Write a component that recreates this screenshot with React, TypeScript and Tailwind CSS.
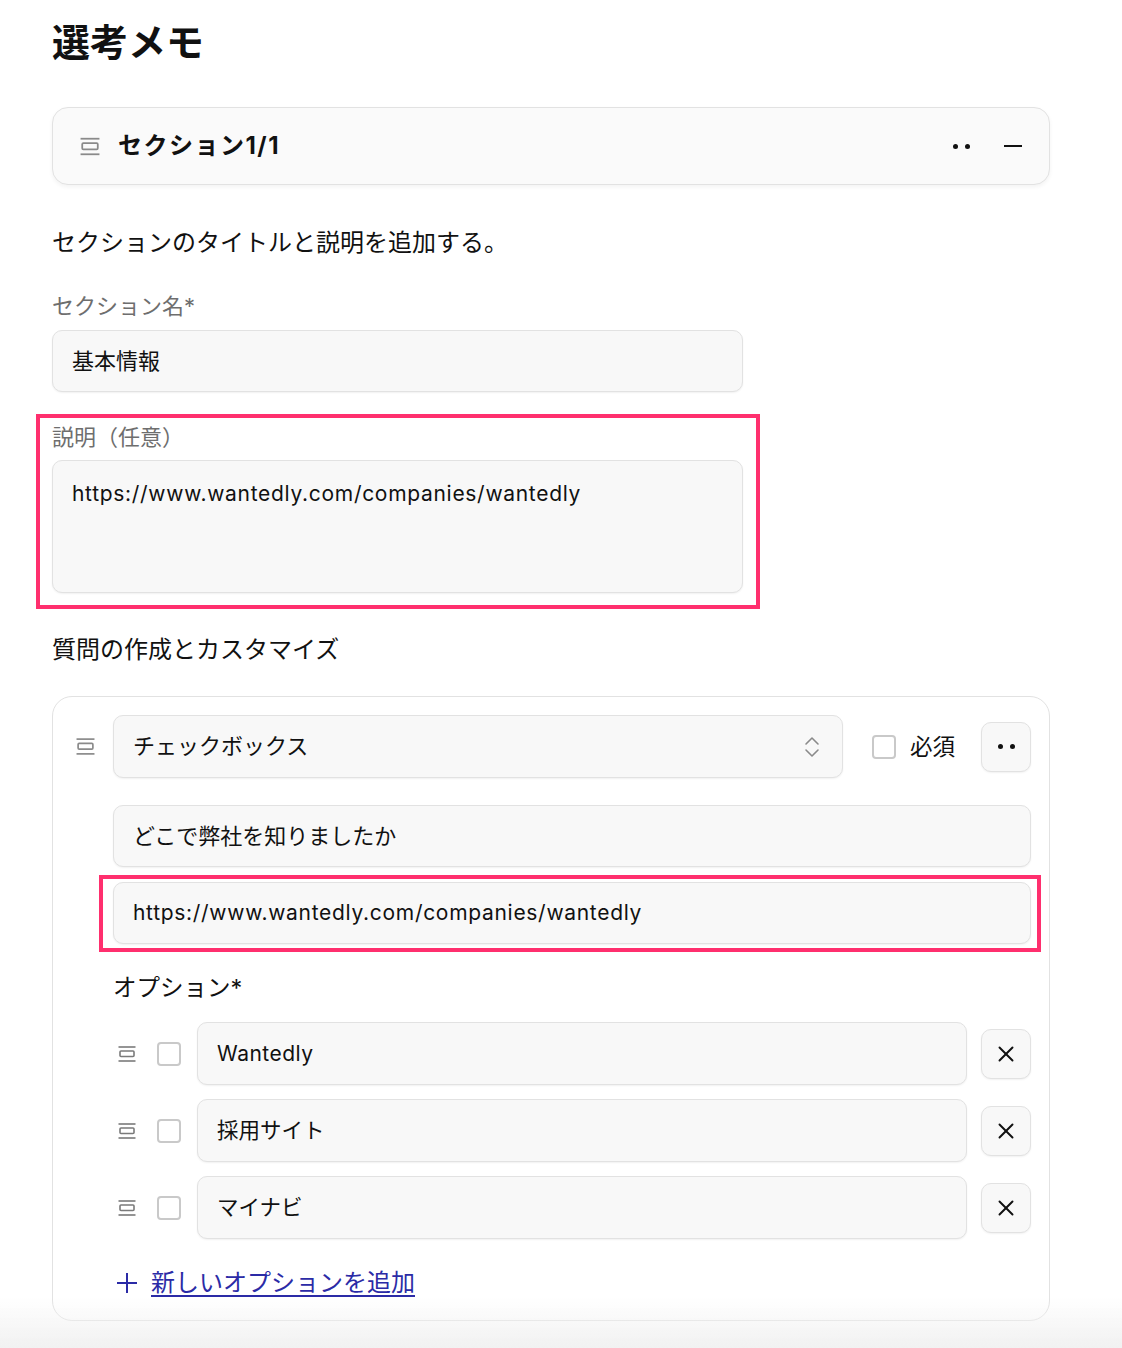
import { X } from 'lucide-react'

const font = { fontFamily: '"Inter", "Noto Sans CJK JP", sans-serif' }

function DragHandle({ className = '' }: { className?: string }) {
  return (
    <svg viewBox="0 0 18 16" className={`shrink-0 ${className}`} fill="none" stroke="currentColor" strokeWidth="1.6">
      <line x1="0.5" y1="1" x2="17.5" y2="1" />
      <rect x="2" y="5" width="14" height="5.5" rx="1" />
      <line x1="0.5" y1="15" x2="17.5" y2="15" />
    </svg>
  )
}

function Dots() {
  return (
    <span className="flex items-center gap-[7px]">
      <span className="h-[5px] w-[5px] rounded-full bg-[#111]" />
      <span className="h-[5px] w-[5px] rounded-full bg-[#111]" />
    </span>
  )
}

function Checkbox() {
  return <span className="block h-[24px] w-[24px] shrink-0 rounded-[4px] border-2 border-[#c9c9c9] bg-white" />
}

const field =
  'flex items-center rounded-[10px] border border-[#e2e2e2] bg-[#f8f8f8] px-[19px] text-[22px] text-[#111] shadow-[0_1px_2px_rgba(0,0,0,0.06)]'

const options = ['Wantedly', '採用サイト', 'マイナビ']

export default function App() {
  return (
    <div className="relative min-h-[1348px] bg-white pl-[52px] text-[#111]" style={font}>
      <div className="w-[998px]">
        <h1 className="pt-[15px] text-[38px] font-bold leading-[54px]">選考メモ</h1>

        {/* section header */}
        <div className="mt-[38px] flex h-[78px] items-center rounded-[16px] border border-[#e2e2e2] bg-[#fafafa] pl-[27px] pr-[27px] shadow-[0_2px_4px_rgba(0,0,0,0.05)]">
          <DragHandle className="h-[19px] w-[20px] text-[#8a8a8a]" />
          <span className="ml-[18px] text-[24px] font-bold tracking-[1.5px]">セクション1/1</span>
          <div className="ml-auto flex items-center gap-[34px]">
            <Dots />
            <span className="block h-[2px] w-[18px] bg-[#111]" />
          </div>
        </div>

        <p className="mt-[43px] text-[24px] leading-[30px]">セクションのタイトルと説明を追加する。</p>

        <label className="mt-[33px] block text-[22px] leading-[30px] text-[#6e6e6e]">セクション名*</label>
        <div className={`${field} mt-[9px] h-[62px] w-[691px]`}>基本情報</div>

        <div className="-ml-[16px] mt-[22px] w-[724px] border-4 border-[#ff2f6e] pb-[12px] pl-[12px] pr-[13px] pt-[4px]">
          <label className="block text-[22px] leading-[30px] text-[#6e6e6e]">説明（任意）</label>
          <div className={`${field} mt-[8px] h-[133px] !items-start pt-[17px]`}>
            <span className="text-[21px] tracking-[0.7px]">https://www.wantedly.com/companies/wantedly</span>
          </div>
        </div>

        <p className="mt-[26px] text-[24px] leading-[30px]">質問の作成とカスタマイズ</p>

        {/* question card */}
        <div className="mt-[31px] rounded-[20px] border border-[#e2e2e2] bg-white pb-[22px] pl-[23px] pr-[18px] pt-[18px]">
          <div className="flex items-center">
            <DragHandle className="h-[17px] w-[19px] text-[#8a8a8a]" />
            <div className={`${field} ml-[18px] h-[63px] w-[730px] justify-between pr-[22px]`}>
              <span>チェックボックス</span>
              <svg viewBox="0 0 16 24" className="h-[24px] w-[16px] text-[#8a8a8a]" fill="none" stroke="currentColor" strokeWidth="1.6" strokeLinecap="round" strokeLinejoin="round">
                <path d="M2 9 L8 3 L14 9" />
                <path d="M2 15 L8 21 L14 15" />
              </svg>
            </div>
            <span className="ml-[29px]"><Checkbox /></span>
            <span className="ml-[14px] text-[22.5px]">必須</span>
            <button className="ml-auto flex h-[50px] w-[50px] items-center justify-center rounded-[10px] border border-[#e2e2e2] bg-[#f8f8f8] shadow-[0_1px_2px_rgba(0,0,0,0.06)]">
              <Dots />
            </button>
          </div>

          <div className="ml-[37px]">
            <div className={`${field} mt-[27px] h-[62px]`}>どこで弊社を知りましたか</div>

            <div className="-ml-[14px] -mr-[10px] mt-[8px] border-4 border-[#ff2f6e] pb-[4px] pl-[10px] pr-[6px] pt-[3px]">
              <div className={`${field} h-[62px]`}>
                <span className="text-[21px] tracking-[0.7px]">https://www.wantedly.com/companies/wantedly</span>
              </div>
            </div>

            <p className="mt-[21px] text-[23.5px] leading-[30px]">オプション*</p>

            <div className="mt-[19px] flex flex-col gap-[14px]">
              {options.map((o) => (
                <div key={o} className="flex items-center">
                  <DragHandle className="ml-[5px] h-[16px] w-[18px] text-[#7a7a7a]" />
                  <span className="ml-[21px]"><Checkbox /></span>
                  <div className={`${field} ml-[16px] h-[63px] flex-1`}>
                    <span className={o === 'Wantedly' ? 'text-[21px] tracking-[0.5px]' : 'text-[21.5px]'}>{o}</span>
                  </div>
                  <button className="ml-[14px] flex h-[50px] w-[50px] items-center justify-center rounded-[10px] border border-[#e2e2e2] bg-[#f8f8f8] shadow-[0_1px_2px_rgba(0,0,0,0.06)]">
                    <X className="h-[26px] w-[26px] text-[#111]" strokeWidth={1.8} />
                  </button>
                </div>
              ))}
            </div>

            <a href="#" className="mt-[29px] flex items-center text-[24px] leading-[30px] text-[#2b2ba6]">
              <svg viewBox="0 0 22 22" className="ml-[3px] h-[22px] w-[22px]" fill="none" stroke="currentColor" strokeWidth="2">
                <line x1="11" y1="1" x2="11" y2="21" />
                <line x1="1" y1="11" x2="21" y2="11" />
              </svg>
              <span className="ml-[13px] underline decoration-2 underline-offset-4">新しいオプションを追加</span>
            </a>
          </div>
        </div>
      </div>

      <div className="pointer-events-none fixed bottom-0 left-0 right-0 h-[50px] bg-gradient-to-b from-white/0 to-[#f1f1f1]" />
    </div>
  )
}
